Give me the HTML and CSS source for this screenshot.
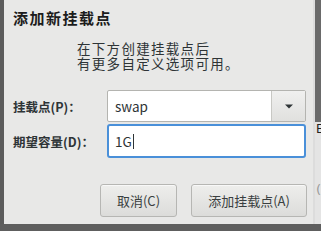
FILE: index.html
```html
<!DOCTYPE html>
<html lang="zh-CN">
<head>
<meta charset="utf-8">
<title>添加新挂载点</title>
<link rel="stylesheet" href="styles.css">
</head>
<body>
<div class="screen">
  <div class="main">
    <div class="edge-left"></div>
    <div class="dialog">
      <div class="title">添加新挂载点</div>
      <div class="info">在下方创建挂载点后<br>有更多自定义选项可用。</div>
      <div class="form">
        <div class="row">
          <label class="label">挂载点(P)：</label>
          <div class="combo">
            <div class="combo-text">swap</div>
            <div class="combo-btn">
              <svg width="8" height="5" viewBox="0 0 8 5"><path d="M0 0.5 L8 0.5 L4 4.5 Z" fill="#2e3436"/></svg>
            </div>
          </div>
        </div>
        <div class="row">
          <label class="label">期望容量(D)：</label>
          <div class="entry"><span>1G</span><span class="caret"></span></div>
        </div>
      </div>
      <div class="buttons">
        <button class="btn btn-cancel">取消(C)</button>
        <button class="btn btn-add">添加挂载点(A)</button>
      </div>
    </div>
    <div class="edge-right">
      <div class="er-top"></div>
      <div class="er-mid">
        <span class="er-e">E</span>
        <span class="er-p">(</span>
      </div>
    </div>
  </div>
  <div class="edge-bottom"></div>
</div>
</body>
</html>
```
FILE: styles.css
```css
html, body {
  margin: 0;
  padding: 0;
}
body {
  font-family: "Noto Sans CJK SC", sans-serif;
  color: #2e3436;
}
.screen {
  width: 321px;
  height: 231px;
  background: #5e5e5e;
  overflow: hidden;
}
.main {
  display: flex;
  height: 224px;
}
.edge-left {
  width: 4px;
  background: #5c5c5c;
}
.dialog {
  width: 309px;
  background: #e8e8e7;
  border-right: 2px solid #dcdcdc;
  display: flex;
  flex-direction: column;
}
.title {
  font-family: "Noto Sans CJK SC", sans-serif;
  font-weight: bold;
  font-size: 15px;
  line-height: 20px;
  color: #1c1c1c;
  padding: 8px 0 0 9px;
  letter-spacing: 1.5px;
}
.info {
  font-family: "Noto Sans CJK SC", sans-serif;
  font-size: 13.5px;
  line-height: 15px;
  color: #2e3436;
  margin: 13px 0 0 73px;
  letter-spacing: 1.3px;
}
.form {
  margin-top: 19px;
  display: flex;
  flex-direction: column;
  gap: 2px;
}
.row {
  display: flex;
  align-items: center;
}
.label {
  width: 103px;
  flex: none;
  box-sizing: border-box;
  padding-left: 9px;
  font-family: "Noto Sans CJK SC", sans-serif;
  font-weight: bold;
  font-size: 12.5px;
  color: #2e3436;
  white-space: nowrap;
}
.combo {
  width: 199px;
  height: 32px;
  box-sizing: border-box;
  border: 1px solid #b4b4b0;
  border-radius: 2px;
  background: #ffffff;
  display: flex;
}
.combo-text {
  flex: 1;
  font-size: 13.5px;
  line-height: 30px;
  padding-left: 7px;
  color: #2e3436;
}
.combo-btn {
  width: 33px;
  border-left: 1px solid #c8c8c4;
  background: linear-gradient(#f0f0ef, #e0e0de);
  display: flex;
  align-items: center;
  justify-content: center;
}
.entry {
  width: 199px;
  height: 34px;
  box-sizing: border-box;
  border: 2px solid #4a90d9;
  border-radius: 3px;
  background: #ffffff;
  font-size: 13.5px;
  line-height: 30px;
  padding-left: 6px;
  color: #2e3436;
  display: flex;
  align-items: center;
}
.caret {
  display: inline-block;
  width: 1px;
  height: 15px;
  background: #2e3436;
  margin-left: 1px;
}
.buttons {
  margin-top: 26px;
  display: flex;
  justify-content: flex-end;
  gap: 14px;
  padding-right: 6px;
}
.btn {
  height: 33px;
  box-sizing: border-box;
  border: 1px solid #b6b6b3;
  border-radius: 3px;
  background: linear-gradient(#eeeeec, #dcdcda);
  font-family: "Noto Sans CJK SC", sans-serif;
  font-size: 13px;
  color: #3a3f40;
  padding: 0;
  box-shadow: inset 0 1px 0 #f8f8f8;
}
.btn-cancel {
  width: 77px;
}
.btn-add {
  width: 116px;
}
.edge-right {
  width: 6px;
  display: flex;
  flex-direction: column;
}
.er-top {
  height: 122px;
  background: #6a6a6a;
}
.er-mid {
  flex: 1;
  background: #e4e4e4;
  position: relative;
  overflow: hidden;
}
.er-e {
  position: absolute;
  left: 1px;
  top: 0px;
  font-size: 12px;
  color: #222;
  font-family: "DejaVu Sans", sans-serif;
}
.er-p {
  position: absolute;
  left: 1px;
  top: 60px;
  font-size: 13px;
  color: #9a9a9a;
  font-family: "DejaVu Sans", sans-serif;
}
.edge-bottom {
  height: 7px;
  background: #5e5e5e;
}
```
